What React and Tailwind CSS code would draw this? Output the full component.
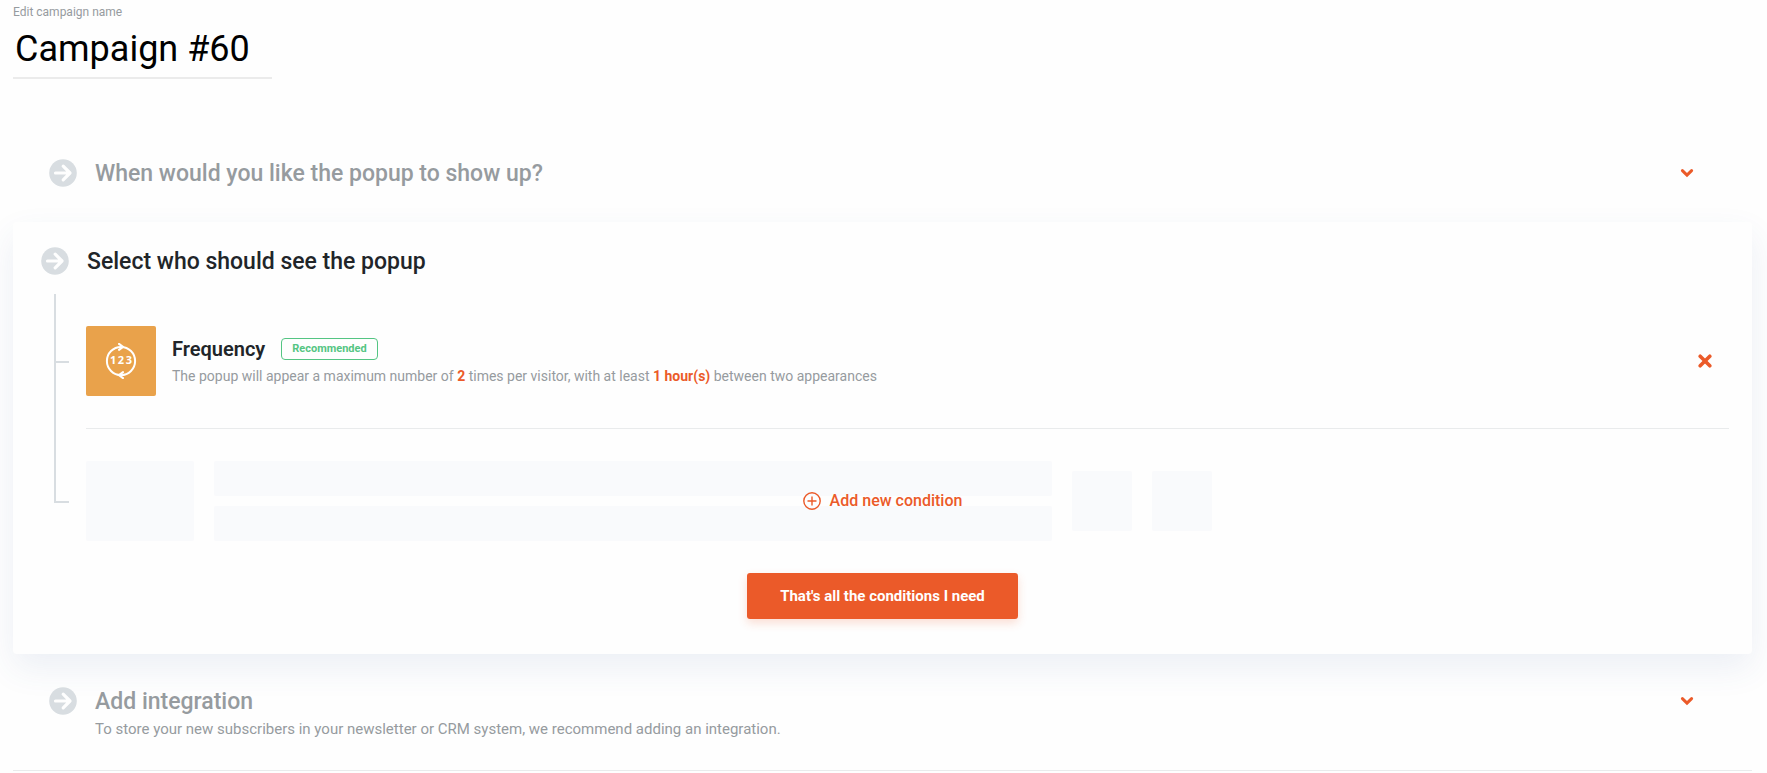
import React, { useState } from 'react';

const ArrowBadge = () => (
  <svg className="size-7 shrink-0" viewBox="0 0 28 28" aria-hidden>
    <circle cx="14" cy="14" r="13.8" fill="#d8dde1" />
    <path d="M6.5 14h14M14.2 7.2l6.8 6.8-6.8 6.8" fill="none" stroke="#fefefe" strokeWidth="3.2" strokeLinecap="round" strokeLinejoin="round" />
  </svg>
);

const ChevronIcon = () => (
  <svg className="w-3.5 h-2.5" viewBox="0 0 14 10" aria-hidden>
    <path d="M2.4 2.6 7 7.1l4.6-4.5" fill="none" stroke="#eb5a29" strokeWidth="3" strokeLinecap="round" strokeLinejoin="miter" />
  </svg>
);

const CloseIcon = () => (
  <svg className="size-3.5" viewBox="0 0 14 14" aria-hidden>
    <path d="m2.2 2.2 9.6 9.6m0-9.6-9.6 9.6" fill="none" stroke="#eb5a29" strokeWidth="3.6" strokeLinecap="round" />
  </svg>
);

const PlusCircleIcon = () => (
  <svg className="size-[18px]" viewBox="0 0 18 18" aria-hidden>
    <circle cx="9" cy="9" r="8.2" fill="none" stroke="#eb5a29" strokeWidth="1.4" />
    <path d="M9 5v8M5 9h8" fill="none" stroke="#eb5a29" strokeWidth="1.4" strokeLinecap="round" />
  </svg>
);

const FrequencyIcon = () => (
  <svg className="size-9" viewBox="0 0 36 36" aria-hidden>
    <circle cx="18" cy="18" r="14.1" fill="none" stroke="#fff" strokeWidth="2" />
    <path d="m16 0.9 4 3-4 3M20 29.1l-4 3 4 3" fill="none" stroke="#fff" strokeWidth="2" strokeLinecap="round" strokeLinejoin="round" />
    <g fill="#fff" fontSize="11" fontWeight="700" textAnchor="middle" fontFamily="Open Sans, sans-serif">
      <text x="10.2" y="21.4">1</text>
      <text x="18" y="21.4">2</text>
      <text x="26" y="21.4">3</text>
    </g>
  </svg>
);

const Step = ({ title, children }) => (
  <section className="flex items-start justify-between pl-9 pr-[58px]">
    <div className="flex items-start gap-[18px]">
      <ArrowBadge />
      <div>
        <h2 className="text-[23px] leading-[30px] font-medium text-[#969b9f]">{title}</h2>
        {children}
      </div>
    </div>
    <button aria-label={`Open ${title}`} className="flex h-7 items-center">
      <ChevronIcon />
    </button>
  </section>
);

const App = () => {
  const [name, setName] = useState('Campaign #60');
  const [showFrequency, setShowFrequency] = useState(true);

  return (
    <div className="min-h-screen bg-[#fefefe] pl-[13px] pr-[15px] font-[Roboto,sans-serif]">
      <header className="flex w-[259px] flex-col pt-1">
        <label htmlFor="campaign" className="text-xs leading-4 text-[#969b9f]">Edit campaign name</label>
        <input
          id="campaign"
          value={name}
          onChange={(e) => setName(e.target.value)}
          className="h-[59px] w-full border-b-2 border-[#ebebeb] bg-transparent px-0.5 text-4xl text-black outline-none"
        />
      </header>

      <main>
        <div className="pt-20 pb-[33px]">
          <Step title="When would you like the popup to show up?" />
        </div>

        <section className="rounded bg-[#fefefe] px-7 pt-[25px] pb-[35px] shadow-[0_14px_34px_rgba(60,90,150,0.09)]">
          <div className="flex items-start gap-[18px]">
            <ArrowBadge />
            <h2 className="text-[23px] leading-[30px] font-medium text-[#212529]">Select who should see the popup</h2>
          </div>

          <div className="relative mt-[17px] pl-[45px]">
            {/* tree line joining the conditions */}
            <div className="absolute top-0 bottom-[38px] left-[13px] w-[15px] border-b-2 border-l-2 border-[#d8dde1]" />

            {showFrequency && (
              <div className="relative flex items-center border-b border-[#e9ebec] py-8 -mr-[5px]">
                <div className="absolute -left-[30px] top-[67px] h-0.5 w-[13px] bg-[#d8dde1]" />
                <div className="flex size-[70px] items-center justify-center rounded-xs bg-[#e9a24b]">
                  <FrequencyIcon />
                </div>
                <div className="ml-4 grow pt-0.5">
                  <div className="flex items-center gap-4">
                    <h3 className="text-xl font-semibold text-[#212529]">Frequency</h3>
                    <span className="rounded border border-[#54c583] px-2.5 text-[11px] leading-5 font-bold text-[#54c583]">Recommended</span>
                  </div>
                  <p className="text-sm leading-[26px] text-[#969b9f]">
                    The popup will appear a maximum number of <b className="text-[#eb5a29]">2</b> times per visitor, with at least <b className="text-[#eb5a29]">1 hour(s)</b> between two appearances
                  </p>
                </div>
                <button aria-label="Remove condition" className="mr-[17px]" onClick={() => setShowFrequency(false)}>
                  <CloseIcon />
                </button>
              </div>
            )}

            <div className="mt-8 -mr-[5px] flex items-center gap-5">
              <div className="h-20 w-[108px] rounded-xs bg-[#f9fafc]" />
              <div className="flex w-[51%] flex-col gap-2.5">
                <div className="h-[35px] rounded-xs bg-[#f9fafc]" />
                <div className="h-[35px] rounded-xs bg-[#f9fafc]" />
              </div>
              <div className="size-[60px] rounded-xs bg-[#f9fafc]" />
              <div className="size-[60px] rounded-xs bg-[#f9fafc]" />
            </div>
            <button className="absolute inset-x-0 bottom-0 flex h-20 items-center justify-center gap-[9px] font-medium text-[#eb5a29]">
              <PlusCircleIcon />
              Add new condition
            </button>
          </div>

          <div className="mt-8 flex justify-center">
            <button className="h-[46px] rounded-[3px] bg-[#eb5a29] px-[33px] text-[15px] font-bold text-white shadow-[0_4px_10px_rgba(235,90,41,0.2)]">
              That's all the conditions I need
            </button>
          </div>
        </section>

        <div className="border-b border-[#e9ebec] pt-[33px] pb-[29px]">
          <Step title="Add integration">
            <p className="text-[15px] leading-6 text-[#969b9f]">
              To store your new subscribers in your newsletter or CRM system, we recommend adding an integration.
            </p>
          </Step>
        </div>
      </main>
    </div>
  );
};

export default App;
